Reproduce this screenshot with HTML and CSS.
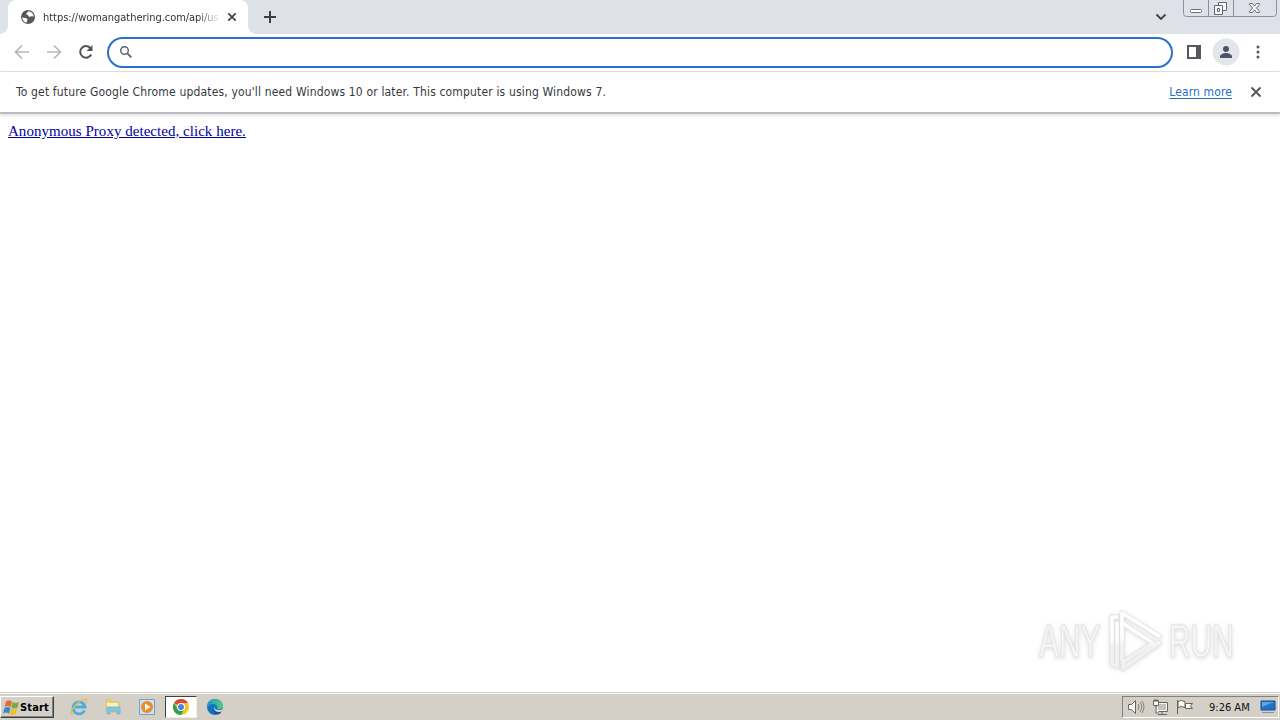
FILE: index.html
```html
<!DOCTYPE html>
<html lang="en">
<head>
<meta charset="utf-8">
<title>Browser desktop</title>
<link rel="stylesheet" href="styles.css">
</head>
<body>
<div class="desktop">
  <header class="tabstrip">
    <div class="tab">
      <svg class="globe" width="16" height="16" viewBox="0 0 16 16"><circle cx="8" cy="8" r="7" fill="#54585d"/><path d="M2.200 8.400 5.800 9l2 1.600-1 1.200.2 1.800C4.200 13.300 2.200 11.200 2.200 8.400ZM8 2.300c.2 1.500-1.500 1.300-1.800 2.500-.3 1.100 1.800.7 2 1.600.2 1.300 1.600 1.600 2.600 1 .8-.5 1.800.3 2.900 0C13.500 4.700 11 2.400 8 2.300Z" fill="#fff"/></svg>
      <span class="tab-title">https://womangathering.com/api/us</span>
      <svg class="tab-close" width="10" height="10" viewBox="0 0 10 10"><path d="m1.300 1.300 7.400 7.400m0-7.400L1.300 8.700" stroke="#3c4043" stroke-width="1.700"/></svg>
    </div>
    <svg class="new-tab" width="14" height="14" viewBox="0 0 14 14"><path d="M7 1v12M1 7h12" stroke="#3c4043" stroke-width="2"/></svg>
    <svg class="tab-search" width="12" height="8" viewBox="0 0 12 8"><path d="m1.500 1.500 4.500 4.500 4.500-4.500" fill="none" stroke="#3c4043" stroke-width="1.800"/></svg>
    <svg class="window-controls" width="94" height="18" viewBox="0 0 94 18"><path d="M.5 0v13.500q0 3 3 3h87q3 0 3-3V0M25.500 0v16M50.500 0v16" fill="none" stroke="#8b919b"/><rect x="7.500" y="9.500" width="11" height="3" rx="1" fill="#fff" stroke="#6a707b"/><path d="M35.500 2.500h8v8h-8z" fill="#f7f8fa" stroke="#626873"/><path d="M31.500 5.500h8v9h-8z" fill="#f7f8fa" stroke="#626873"/><path d="M34.500 8.500h2v3h-2z" fill="#fff" stroke="#626873"/><path d="M66.500 3.500h3l2 2.500 2-2.500h3v1l-3 3.500 3 3.500v1h-3l-2-2.500-2 2.500h-3v-1l3-3.500-3-3.500z" fill="#f4f5f7" stroke="#666c77"/></svg>
  </header>

  <nav class="toolbar">
    <svg class="nav-icon" width="16" height="16" viewBox="0 0 16 16"><path d="M15 8H2M8 1.500 1.500 8 8 14.500" fill="none" stroke="#b6b8bb" stroke-width="1.700"/></svg>
    <svg class="nav-icon" width="16" height="16" viewBox="0 0 16 16"><path d="M1 8h13M8 1.500 14.500 8 8 14.500" fill="none" stroke="#b6b8bb" stroke-width="1.700"/></svg>
    <svg class="nav-icon" width="16" height="16" viewBox="0 0 16 16"><path d="M13.200 10.500A5.800 5.800 0 1 1 12.300 4" fill="none" stroke="#505458" stroke-width="2"/><path d="M14.500 1v6h-6z" fill="#505458"/></svg>
    <div class="omnibox">
      <svg width="14" height="14" viewBox="0 0 14 14"><circle cx="5.500" cy="5.500" r="3.800" fill="none" stroke="#5f6368" stroke-width="1.400"/><path d="m8.300 8.300 4 4" stroke="#5f6368" stroke-width="1.800"/></svg>
    </div>
    <svg class="side-panel" width="14" height="14" viewBox="0 0 14 14"><path d="M1 1h12v12H1z" fill="none" stroke="#54585d" stroke-width="2"/><path d="M9 1h5v12H9z" fill="#54585d"/></svg>
    <svg class="profile" width="28" height="28" viewBox="0 0 28 28"><circle cx="14" cy="14" r="13.500" fill="#e3e6ea"/><circle cx="14" cy="11" r="3" fill="#4b5569"/><path d="M8 20v-1.500c0-2.300 3.500-3.500 6-3.500s6 1.200 6 3.500V20z" fill="#4b5569"/></svg>
    <svg class="menu" width="4" height="14" viewBox="0 0 4 14"><g fill="#54585d"><circle cx="2" cy="2" r="1.500"/><circle cx="2" cy="7" r="1.500"/><circle cx="2" cy="12" r="1.500"/></g></svg>
  </nav>

  <section class="infobar">
    <span class="notice">To get future Google Chrome updates, you'll need Windows 10 or later. This computer is using Windows 7.</span>
    <a class="learn">Learn more</a>
    <svg class="info-close" width="12" height="12" viewBox="0 0 12 12"><path d="m1.500 1.500 9 9m0-9-9 9" stroke="#54585d" stroke-width="2"/></svg>
  </section>

  <main class="page">
    <a class="proxy-link">Anonymous Proxy detected, click here.</a>
    <div class="watermark">
      <span class="mark-text any">ANY</span>
      <svg class="mark-play" width="60" height="64" viewBox="0 0 60 64"><defs><linearGradient id="fade" x2="0" y2="1"><stop offset=".45" stop-color="#fff"/><stop offset=".6" stop-color="#f1f1f1"/></linearGradient></defs><g fill="none" stroke-linejoin="round" stroke-linecap="round"><path d="M17 51V4l37 23M19 15l29 19M54 34 18 59v-6l30-19M12 8H7v47l5 2V14" stroke="#e0e0e0" stroke-width="5"/><path d="M17 51V4l37 23M19 15l29 19M54 34 18 59v-6l30-19M12 8H7v47l5 2V14" stroke="url(#fade)" stroke-width="3.700"/></g></svg>
      <span class="mark-text run">RUN</span>
    </div>
  </main>

  <footer class="taskbar">
    <div class="start">
      <svg width="17" height="17" viewBox="0 0 17 17"><path d="M3 2.500q3-2 6 0L7.600 8q-3-2-6 0z" fill="#e46b37"/><path d="M9.700 3q3 2 6.300 0l-1.500 5.500q-3 2-6.200 0z" fill="#78aa3c"/><path d="M1.400 9q3-2 6 0L6 14.500q-3-2-6 0z" fill="#378bc5"/><path d="M8 9.500q3 2 6.200 0L12.800 15q-3 2-6.200 0z" fill="#f1bd35"/></svg>
      <span class="start-label">Start</span>
    </div>
    <div class="launchers">
      <div class="launcher"><svg width="18" height="18" viewBox="0 0 18 18"><path d="M14.500 12.500A6 6 0 1 1 15 9H5" fill="none" stroke="#49aee0" stroke-width="2.800"/><path d="M3 16C-2 18 3 8 9 4s9-4 7 1" fill="none" stroke="#e7bd4d" stroke-width="1.400"/></svg></div>
      <div class="launcher"><svg width="18" height="18" viewBox="0 0 18 18"><path d="M2 4V2h5l1 2h7v10H2z" fill="#ecd17a" stroke="#d9bc60" stroke-width=".7"/><path d="M3 5h11v4H3z" fill="#fbf0b8"/><path d="M3 9h13v7h-3v-3H6v3H3z" fill="#83c7e5" stroke="#5ba7cc" stroke-width=".6"/></svg></div>
      <div class="launcher"><svg width="18" height="18" viewBox="0 0 18 18"><path d="M1.500 1.500h15v15h-15z" fill="#c9e4f7" stroke="#6ca4cf"/><circle cx="9" cy="9" r="6" fill="#ef8b20"/><path d="m7 5.500 5.500 3.500L7 12.500z" fill="#fff"/></svg></div>
      <div class="launcher active"><svg width="18" height="18" viewBox="0 0 18 18"><circle cx="9" cy="9" r="8" fill="#f6c326"/><path d="M9 9 2.070 5A8 8 0 0 1 15.930 5H9z" fill="#df4638"/><path d="M2.070 5A8 8 0 0 0 9 17l3.460-6L9 9 5.540 11z" fill="#2d9f51"/><circle cx="9" cy="9" r="4" fill="#fff"/><circle cx="9" cy="9" r="3" fill="#4285e8"/></svg></div>
      <div class="launcher"><svg width="18" height="18" viewBox="0 0 18 18"><defs><linearGradient id="edge"><stop stop-color="#1696d6"/><stop offset="1" stop-color="#5bcf75"/></linearGradient></defs><circle cx="9" cy="9" r="8" fill="#1673bd"/><path d="M1 8C2-1 15-1 17 8c0 4-5 4-6 2 1-2-1-4-4-4S2 8 1 10z" fill="url(#edge)"/><path d="M7 9c-1 3 2 6 6 5l3-1c-1 1.500-2 2.500-3.500 3.300C8 16 5.500 12 7 9Z" fill="#164f9c"/><path d="M8.500 8.500c-.5 3 3 4.500 7.500 3l1-.5v2l-3 1c-4 .5-7-2.500-5.500-5.500Z" fill="#d4d0c8"/></svg></div>
    </div>
    <div class="tray">
      <svg class="tray-icons" width="68" height="18" viewBox="0 0 68 18"><g fill="#f8f8f5" stroke="#66645f"><path d="M.5 6.500h3l4-4v13l-4-4h-3z"/><path d="M10 6q2 3 0 6m2-8q3.500 5 0 10m2-11q4 6 0 12" fill="none" stroke="#85837e"/><path d="M28.500 4.500h11v9h-11zM30 16.500h9M34 14v2"/><path d="M30 6h8v6h-8z" fill="#c4c2bc" stroke="none"/><path d="M25.500 2.500h5v5h-5zM27 1v3m2-3v3m-1 4v7h3"/><path d="M49.500 2v14M50 3.500q3-2 7 0v6q-4-2-7 0zM57.500 5.500h7l-2 2.500 2 2.500h-7z"/></g></svg>
      <span class="clock">9:26 AM</span>
      <svg class="desktop-icon" width="16" height="14" viewBox="0 0 16 14"><path d="M1 1h14v9H1z" fill="#2374c5" stroke="#164d91"/><path d="M2 2h12L2 7z" fill="#5ba7df"/><path d="M2 12h12v1H2z" fill="#7f98b2"/></svg>
    </div>
  </footer>
</div>
</body>
</html>
```
FILE: styles.css
```css
* { box-sizing: border-box; }
body { margin: 0; background: #fff; font-family: "DejaVu Sans Condensed", "DejaVu Sans", sans-serif; font-stretch: condensed; }
svg { display: block; flex: none; }
.desktop { width: 1280px; height: 720px; display: flex; flex-direction: column; overflow: hidden; }
.tabstrip { height: 34px; background: #dee1e7; display: flex; align-items: flex-start; flex: none; padding-left: 8px; }
.tab { position: relative; width: 240px; height: 34px; background: #fff; border-radius: 8px 8px 0 0; display: flex; align-items: center; padding-left: 12px; }
.tab::before, .tab::after { content: ""; position: absolute; bottom: 0; width: 8px; height: 8px; }
.tab::before { left: -8px; background: radial-gradient(circle at 0 0, #dee1e7 7.5px, #fff 8px); }
.tab::after { right: -8px; background: radial-gradient(circle at 100% 0, #dee1e7 7.5px, #fff 8px); }
.globe { margin-right: 7px; }
.tab-title { width: 176px; white-space: nowrap; font-size: 11px; letter-spacing: -.04px; color: #303236; -webkit-mask-image: linear-gradient(90deg, #000 155px, transparent 178px); mask-image: linear-gradient(90deg, #000 155px, transparent 178px); }
.tab-close { margin-left: 8px; }
.new-tab { margin: 10px 0 0 15px; }
.tab-search { margin: 13px 16px 0 auto; }
.window-controls { margin-right: 3px; }
.toolbar { height: 38px; border-bottom: 1px solid #dadce0; flex: none; display: flex; align-items: center; padding: 0 19px 1px 14px; }
.nav-icon { margin-right: 16px; }
.nav-icon + .nav-icon + .nav-icon { margin-right: 13px; }
.omnibox { width: 1066px; height: 31px; border: 2px solid #2b70cd; border-radius: 16px; display: flex; align-items: center; padding-left: 10px; flex: none; }
.side-panel { margin-left: 14px; }
.profile { margin-left: 11px; }
.menu { margin-left: 16px; }
.infobar { height: 42px; border-bottom: 2px solid #b9bbbf; flex: none; display: flex; align-items: center; padding: 0 18px 0 16px; box-shadow: 0 2px 3px #e4e4e4; font-size: 12px; color: #37393c; }
.notice { white-space: nowrap; letter-spacing: .16px; }
.learn { margin-left: auto; color: #1f6fc4; letter-spacing: .12px; text-decoration: underline; text-underline-offset: 2px; white-space: nowrap; }
.info-close { margin-left: 18px; }
.page { flex: 1; display: flex; flex-direction: column; align-items: flex-start; padding: 8px; }
.proxy-link { font: 15px/18px "Liberation Serif", serif; letter-spacing: .035px; color: #0000a0; text-decoration: underline; white-space: nowrap; }
.watermark { display: flex; align-items: center; margin: auto 38px 11px auto; filter: drop-shadow(0 1px 2px #ddd); }
.mark-text { flex: none; font: 46px/58px "Liberation Sans", sans-serif; color: #f8f8f8; -webkit-text-stroke: 1.5px #e8e8e8; transform: scaleX(.65); transform-origin: left; white-space: nowrap; }
.any { width: 66px; }
.run { width: 65px; margin-left: 4px; }
.taskbar { height: 28px; flex: none; border-top: 1px solid #d4d0c8; box-shadow: inset 0 1px #fff; background: #d4d0c8; display: flex; align-items: center; padding: 1px 0 0 0; }
.start { width: 54px; height: 22px; display: flex; align-items: center; border: 1px solid; border-color: #fff #404040 #404040 #fff; box-shadow: inset -1px -1px #858580; }
.start svg { margin-left: 2px; }
.start-label { font-size: 11px; font-weight: bold; letter-spacing: .15px; color: #000; }
.launchers { display: flex; margin-left: 9px; }
.launcher { width: 32px; height: 22px; margin-right: 2px; display: flex; align-items: center; justify-content: center; }
.active { background: #fff; border: 1px solid; border-color: #404040 #eee #eee #404040; }
.tray { width: 157px; height: 22px; margin-left: auto; margin-right: 1px; border: 1px solid; border-color: #808080 #fff #fff #808080; display: flex; align-items: center; padding-left: 5px; }
.clock { font-size: 11px; white-space: nowrap; margin-left: 13px; width: 42px; color: #111; }
.desktop-icon { margin-left: 9px; }
```
